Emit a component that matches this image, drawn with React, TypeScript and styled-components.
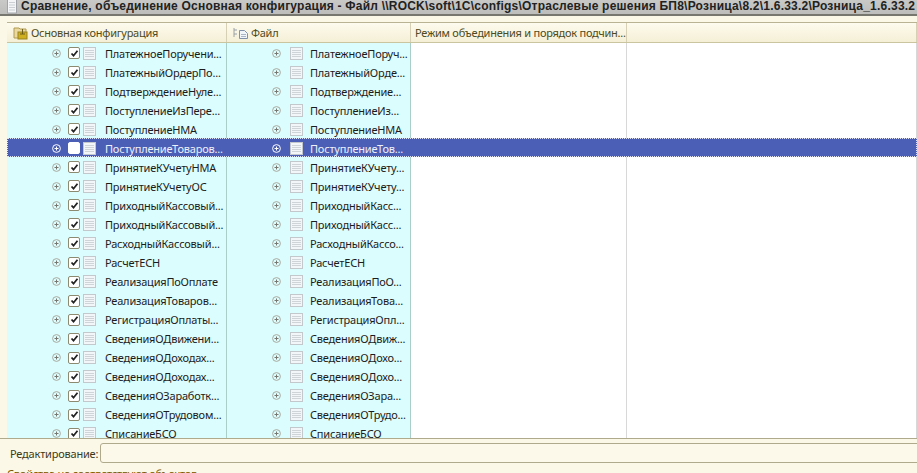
import styled, { createGlobalStyle } from "styled-components";

const GlobalStyle = createGlobalStyle`
  html, body {
    margin: 0;
    padding: 0;
    width: 917px;
    height: 473px;
    overflow: hidden;
    background: #fbf8e8;
  }
`;

const Page = styled.div`
  width: 917px;
  height: 473px;
  display: flex;
  flex-direction: column;
  overflow: hidden;
  font-family: "Noto Sans", "DejaVu Sans", sans-serif;
  font-size: 11px;
  letter-spacing: -0.2px;
  color: #1c1c1c;
`;

const TitleBar = styled.div`
  height: 16px;
  box-sizing: border-box;
  flex: none;
  display: flex;
  align-items: flex-start;
  gap: 4px;
  padding-left: 7px;
  background: linear-gradient(#c9c9c7, #bdbdbb);
  border-bottom: 2px solid #77776f;
  overflow: hidden;
  white-space: nowrap;
`;

const TitleText = styled.span`
  font-family: "Liberation Sans", Arial, sans-serif;
  font-size: 12px;
  line-height: 13px;
  font-weight: 700;
  letter-spacing: 0.22px;
  color: #222;
`;

const Content = styled.div`
  flex: none;
  height: 416px;
  padding: 6px 0 0 7px;
  border-bottom: 1px solid #b0aa8c;
  box-sizing: content-box;
  overflow: hidden;
`;

const Columns = "220px 184px 216px 1fr";

const HeaderRow = styled.div`
  display: grid;
  grid-template-columns: ${Columns};
  height: 21px;
  box-sizing: border-box;
  border-top: 1px solid #b9b394;
  border-bottom: 1px solid #cbc59f;
  background: linear-gradient(#fdfbee, #f5efd6);
`;

const HeaderCell = styled.div`
  display: flex;
  align-items: center;
  gap: 2px;
  padding-left: 4px;
  border-right: 1px solid #d6d1b4;
  color: #4d4a22;
  letter-spacing: -0.25px;
  white-space: nowrap;
  overflow: hidden;
`;

const HeaderIcon = styled.svg`
  width: 16px;
  height: 14px;
  flex: none;
  margin-left: 2px;
`;

const Row = styled.div<{ $selected?: boolean }>`
  display: grid;
  grid-template-columns: ${Columns};
  height: 19.05px;
  box-sizing: border-box;
  background: ${(p) => (p.$selected ? "#4b5fb6" : "transparent")};
  outline: ${(p) => (p.$selected ? "1px dotted #dfe3f5" : "none")};
  outline-offset: -1px;
  color: ${(p) => (p.$selected ? "#eef0fa" : "#1c1c1c")};
`;

const TreeCell = styled.div<{ $selected?: boolean }>`
  display: flex;
  align-items: center;
  padding: 1px 0 0 45px;
  box-sizing: border-box;
  background: ${(p) => (p.$selected ? "transparent" : "#dcfdfd")};
  border-right: 1px solid ${(p) => (p.$selected ? "transparent" : "#a9cfc8")};
  white-space: nowrap;
  overflow: hidden;
`;

const EmptyCell = styled.div<{ $selected?: boolean }>`
  background: ${(p) => (p.$selected ? "transparent" : "#fff")};
  border-right: 1px solid ${(p) => (p.$selected ? "transparent" : "#d8d8d8")};
`;

const ExpandIcon = styled.svg`
  width: 9px;
  height: 9px;
  flex: none;
`;

const CheckBox = styled.span<{ $selected?: boolean }>`
  width: 10px;
  height: 10px;
  flex: none;
  margin-left: 7px;
  border: 1px solid ${(p) => (p.$selected ? "#fff" : "#8d8a72")};
  border-radius: 2px;
  background: #fff;
  display: flex;
  align-items: center;
  justify-content: center;
`;

const DocIcon = styled.svg<{ $first?: boolean }>`
  width: 13px;
  height: 13px;
  flex: none;
  margin-left: ${(p) => (p.$first ? 3 : 9)}px;
  margin-right: ${(p) => (p.$first ? 9 : 7)}px;
`;

const Footer = styled.div`
  flex: 1;
  display: flex;
  flex-direction: column;
`;

const EditRow = styled.div`
  display: flex;
  align-items: center;
  gap: 2px;
  height: 24px;
  padding: 4px 0 0 10px;
  box-sizing: border-box;
  flex: none;
`;

const EditLabel = styled.label`
  color: #3d3a1c;
`;

const EditInput = styled.input`
  flex: 1;
  height: 20px;
  box-sizing: border-box;
  margin-right: -6px;
  padding: 0 4px;
  background: #fcf9ea;
  border: 1px solid #b0aa8c;
  border-radius: 3px;
  outline: none;
`;

const Status = styled.div`
  padding: 3px 0 0 7px;
  color: #7a5a00;
  white-space: nowrap;
`;

type Item = [string, string];

const items: Item[] = [
  ["ПлатежноеПоручени...", "ПлатежноеПоруч..."],
  ["ПлатежныйОрдерПо...", "ПлатежныйОрде..."],
  ["ПодтверждениеНуле...", "Подтверждение..."],
  ["ПоступлениеИзПере...", "ПоступлениеИз..."],
  ["ПоступлениеНМА", "ПоступлениеНМА"],
  ["ПоступлениеТоваров...", "ПоступлениеТов..."],
  ["ПринятиеКУчетуНМА", "ПринятиеКУчету..."],
  ["ПринятиеКУчетуОС", "ПринятиеКУчету..."],
  ["ПриходныйКассовый...", "ПриходныйКасс..."],
  ["ПриходныйКассовый...", "ПриходныйКасс..."],
  ["РасходныйКассовый...", "РасходныйКассо..."],
  ["РасчетЕСН", "РасчетЕСН"],
  ["РеализацияПоОплате", "РеализацияПоО..."],
  ["РеализацияТоваров...", "РеализацияТова..."],
  ["РегистрацияОплаты...", "РегистрацияОпл..."],
  ["СведенияОДвижени...", "СведенияОДвиж..."],
  ["СведенияОДоходах...", "СведенияОДохо..."],
  ["СведенияОДоходах...", "СведенияОДохо..."],
  ["СведенияОЗаработк...", "СведенияОЗара..."],
  ["СведенияОТрудовом...", "СведенияОТрудо..."],
  ["СписаниеБСО", "СписаниеБСО"],
];

function Expand({ selected }: { selected?: boolean }) {
  const stroke = selected ? "#fff" : "#a8a8a0";
  const mark = selected ? "#fff" : "#77776f";
  return (
    <ExpandIcon viewBox="0 0 9 9">
      <circle cx="4.5" cy="4.5" r="3.9" fill="none" stroke={stroke} />
      <path d="M2.5 4.5h4M4.5 2.5v4" stroke={mark} />
    </ExpandIcon>
  );
}

function Doc({ first }: { first?: boolean }) {
  return (
    <DocIcon $first={first} viewBox="0 0 13 13">
      <rect x="0.5" y="0.5" width="12" height="12" fill="#f3f6f8" stroke="#c3c8cc" />
      <path d="M2 3.5h9M2 5.5h9M2 7.5h9M2 9.5h9" stroke="#cfd4d8" />
    </DocIcon>
  );
}

function Tick() {
  return (
    <svg width="9" height="9" viewBox="0 0 9 9">
      <path d="M1.5 4.5l2 2.2 4-5" fill="none" stroke="#222" strokeWidth="1.8" />
    </svg>
  );
}

function WindowIcon() {
  return (
    <svg width="10" height="14" viewBox="0 0 10 14">
      <rect x="0.5" y="-1" width="9" height="14" fill="#f3f5f7" stroke="#a0a4a8" />
      <path d="M2 2.5h6M2 5h6M2 7.5h6M2 10h6" stroke="#ccd0d4" />
    </svg>
  );
}

function ConfigIcon() {
  return (
    <HeaderIcon viewBox="0 0 16 14">
      <path d="M1 2h5l1 1h6v9H1z" fill="#ead9a0" stroke="#b09a50" />
      <rect x="5" y="6" width="9" height="7" fill="#cfae1f" stroke="#9a8420" />
      <path d="M9.5 3v5M7 8h5" stroke="#6d5f1a" />
    </HeaderIcon>
  );
}

function FileIcon() {
  return (
    <HeaderIcon viewBox="0 0 16 14">
      <path d="M1 2v9M1 4h3M1 8h3" fill="none" stroke="#9aa0a6" />
      <path d="M6.5 4.5h5l3 3v5h-8z" fill="#f0f5fa" stroke="#7f90a8" />
      <path d="M8 8.5h5M8 10.5h5" stroke="#a9b5c6" />
    </HeaderIcon>
  );
}

export default function App() {
  return (
    <Page>
      <GlobalStyle />
      <TitleBar>
        <WindowIcon />
        <TitleText>
          {"Сравнение, объединение Основная конфигурация - Файл \\\\ROCK\\soft\\1C\\configs\\Отраслевые решения БП8\\Розница\\8.2\\1.6.33.2\\Розница_1.6.33.2"}
        </TitleText>
      </TitleBar>
      <Content>
        <HeaderRow>
          <HeaderCell>
            <ConfigIcon />
            Основная конфигурация
          </HeaderCell>
          <HeaderCell>
            <FileIcon />
            Файл
          </HeaderCell>
          <HeaderCell>Режим объединения и порядок подчин...</HeaderCell>
          <HeaderCell />
        </HeaderRow>
        {items.map(([left, right], i) => {
          const selected = i === 5;
          return (
            <Row key={i} $selected={selected}>
              <TreeCell $selected={selected}>
                <Expand selected={selected} />
                <CheckBox $selected={selected}>{!selected && <Tick />}</CheckBox>
                <Doc first />
                <span>{left}</span>
              </TreeCell>
              <TreeCell $selected={selected}>
                <Expand selected={selected} />
                <Doc />
                <span>{right}</span>
              </TreeCell>
              <EmptyCell $selected={selected} />
              <EmptyCell $selected={selected} />
            </Row>
          );
        })}
      </Content>
      <Footer>
        <EditRow>
          <EditLabel htmlFor="edit">Редактирование:</EditLabel>
          <EditInput id="edit" />
        </EditRow>
        <Status>Свойства не соответствуют объектов</Status>
      </Footer>
    </Page>
  );
}
